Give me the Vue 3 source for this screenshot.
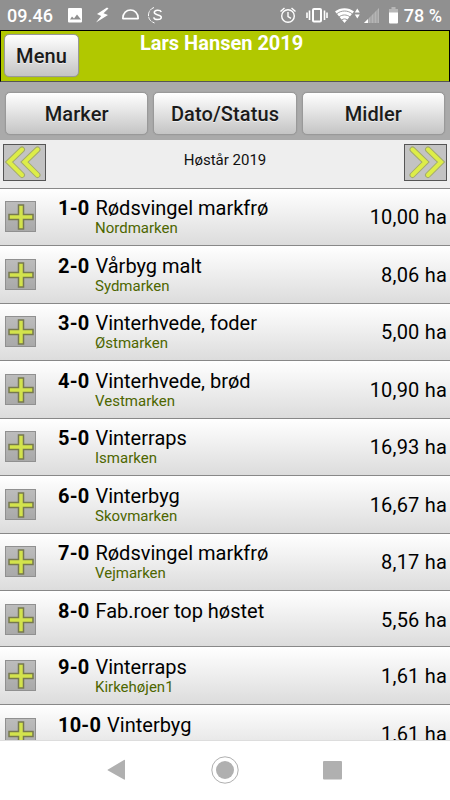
<template>
  <div class="screen">
    <header class="status-bar">
      <span class="clock">09.46</span>
      <svg class="status-icons" width="100" height="20" viewBox="0 0 100 20">
        <path fill="#fff" fill-rule="evenodd" d="M3 3h12q1 0 1 1v12.500q0 1-1 1H3q-1 0-1-1V4q0-1 1-1zM4 14.500h11l-4-5-3 4-2-2z" />
        <path fill="#fff" d="M41 2.500 31 9l4.200 2L30 17.500l12-7.500-4.500-1.700 5-4.800z" />
        <path fill="none" stroke="#fff" stroke-width="1.600" stroke-linejoin="round" d="M56.800 13.600c0-11.500 15.400-11.500 15.400 0z" />
        <path fill="none" stroke="#fff" stroke-width="1" stroke-dasharray="5 1" d="M88 2.500c-6 2-7.500 10-2.500 14l3 1.500" />
        <path fill="none" stroke="#fff" stroke-width="1.500" d="M95.300 7c-1-2.500-7-2.500-7 .6 0 3 7 1.700 7 4.700 0 3-7 3-7.600 0" />
      </svg>
      <svg class="status-icons right" width="120" height="20" viewBox="0 0 120 20">
        <g fill="none" stroke="#fff" stroke-width="1.400">
          <circle cx="9" cy="11" r="6.300" />
          <path d="M9 7v4.500l3 1.800M1.500 6.500l4-3.500M16.500 6.500 12.500 3" />
          <rect x="34" y="4" width="8" height="12.500" rx="1" stroke-width="2" />
          <path stroke-width="1.600" d="M30.500 5.500v9.500M28 7.500v5.500M45.500 5.500v9.500M48 7.500v5.500" />
        </g>
        <path fill="#fff" d="M56 6.500C61 2 70 2 75 6.500L65.500 18z" />
        <path fill="none" stroke="#909090" stroke-width=".9" d="M57.500 9c4.500-4 11.500-4 16 0M60 12c3-2.700 8-2.700 11 0M62.500 15c2-1.500 4-1.500 6 0" />
        <path fill="#fff" d="m78.300 3.500 2.500 4h-5zM78.300 13.500l2.500-4h-5z" />
        <path fill="#b5b5b5" d="M85 18 100 3v15z" />
        <path stroke="#909090" stroke-width=".7" d="M89 12v6M92 9v9M95 6v12M98 4v14" />
        <path fill="#fff" d="m85 18 4-4v4z" />
        <path fill="#b7b7b7" d="M112.500 2h4v2h2.500v4h-9V4h2.500z" />
        <path fill="#fff" d="M110 7.500h9v10q0 1-1 1h-7q-1 0-1-1z" />
      </svg>
      <span class="battery">78 %</span>
    </header>

    <div class="title-bar">
      <button class="btn menu">Menu</button>
      <h1>Lars Hansen 2019</h1>
    </div>

    <nav class="tabs">
      <button v-for="tab in tabs" :key="tab" class="btn">{{ tab }}</button>
    </nav>

    <div class="year">
      <button class="arrow">
        <svg width="41" height="35" viewBox="0 0 41 35">
          <path class="outline" d="M18 4.500 5 17 18 30M33.500 4.500 20.500 17 33.500 30" />
          <path class="line" d="M18 4.500 5 17 18 30M33.500 4.500 20.500 17 33.500 30" />
        </svg>
      </button>
      <span>Høstår 2019</span>
      <button class="arrow next">
        <svg width="41" height="35" viewBox="0 0 41 35">
          <path class="outline" d="M18 4.500 5 17 18 30M33.500 4.500 20.500 17 33.500 30" />
          <path class="line" d="M18 4.500 5 17 18 30M33.500 4.500 20.500 17 33.500 30" />
        </svg>
      </button>
    </div>

    <ul class="fields">
      <li v-for="field in fields" :key="field.nr" :class="{ short: !field.place }">
        <span class="plus">
          <svg width="29" height="29" viewBox="0 0 29 29">
            <path d="M12.500 3h5v9.500h9.500v5h-9.500v9.500h-5v-9.500H3v-5h9.500z" />
          </svg>
        </span>
        <div class="info">
          <p class="name"><b>{{ field.nr }}</b>{{ field.crop }}</p>
          <p class="place">{{ field.place }}</p>
        </div>
        <span class="area">{{ field.area }} ha</span>
      </li>
    </ul>

    <footer class="nav-bar">
      <svg width="450" height="59" viewBox="0 0 450 59">
        <path fill="#b0b0b0" d="M108 28.500 124 19q1-.5 1 .5v18.500q0 1-1 .5L108 29.500q-1-.5 0-1z" />
        <circle cx="225" cy="29" r="13.200" fill="none" stroke="#b0b0b0" />
        <circle cx="225" cy="29" r="9" fill="#b0b0b0" />
        <rect x="323" y="20" width="19" height="18.500" rx="1" fill="#b0b0b0" />
      </svg>
    </footer>
  </div>
</template>

<script setup>
import { ref } from "vue";

const tabs = ["Marker", "Dato/Status", "Midler"];

const fields = ref([
  { nr: "1-0", crop: "Rødsvingel markfrø", place: "Nordmarken", area: "10,00" },
  { nr: "2-0", crop: "Vårbyg malt", place: "Sydmarken", area: "8,06" },
  { nr: "3-0", crop: "Vinterhvede, foder", place: "Østmarken", area: "5,00" },
  { nr: "4-0", crop: "Vinterhvede, brød", place: "Vestmarken", area: "10,90" },
  { nr: "5-0", crop: "Vinterraps", place: "Ismarken", area: "16,93" },
  { nr: "6-0", crop: "Vinterbyg", place: "Skovmarken", area: "16,67" },
  { nr: "7-0", crop: "Rødsvingel markfrø", place: "Vejmarken", area: "8,17" },
  { nr: "8-0", crop: "Fab.roer top høstet", place: "", area: "5,56" },
  { nr: "9-0", crop: "Vinterraps", place: "Kirkehøjen1", area: "1,61" },
  { nr: "10-0", crop: "Vinterbyg", place: "", area: "1,61" },
]);
</script>

<style>
body {
  margin: 0;
}
</style>

<style scoped>
* {
  box-sizing: border-box;
}

.screen {
  width: 450px;
  height: 800px;
  display: flex;
  flex-direction: column;
  overflow: hidden;
  background: #eee;
  color: #111;
  font-family: Roboto, "Liberation Sans", sans-serif;
}

.status-bar {
  flex: none;
  height: 30px;
  display: flex;
  align-items: center;
  padding: 1px 8px 0 7px;
  background: #909090;
  color: #fff;
  font-size: 18px;
  font-weight: 500;
}

.clock {
  width: 59px;
}

.status-icons {
  margin-top: -1px;
}

.status-icons.right {
  margin-left: 113px;
}

.battery {
  margin-left: auto;
  white-space: nowrap;
}

.title-bar {
  flex: none;
  height: 52px;
  display: flex;
  align-items: flex-start;
  padding: 3px;
  border: 1px solid #000;
  border-bottom-color: #555;
  background: #b1c800;
}

h1 {
  margin: -2px 0 0 61px;
  color: #fff;
  font-size: 20px;
  line-height: 23px;
  font-weight: 700;
}

.btn {
  height: 43px;
  padding: 0;
  border: 1px solid #999;
  border-radius: 5px;
  background: linear-gradient(#fff, #c4c4c4);
  box-shadow: 0 0 1px #888;
  color: #1b1b1b;
  font: 500 20px Roboto, sans-serif;
  letter-spacing: 0.1px;
  text-shadow: 0 1px 0 #eee;
}

.menu {
  width: 75px;
}

.tabs {
  flex: none;
  height: 58px;
  display: flex;
  gap: 5px;
  padding: 10px 5px 0;
  background: #aaa;
}

.tabs .btn {
  flex: 1 1 0;
}

.year {
  flex: none;
  height: 47.6px;
  display: flex;
  align-items: flex-start;
  justify-content: space-between;
  padding: 4px 3px 0;
  background: #eee;
  font-size: 15px;
  line-height: 33px;
}

.arrow {
  width: 43px;
  height: 37px;
  padding: 0;
  border: 1px solid #555;
  background: #c3c3c3;
}

.arrow svg {
  display: block;
}

.arrow.next svg {
  transform: scaleX(-1);
}

.arrow path {
  fill: none;
  stroke-linecap: round;
}

.outline {
  stroke: #a3aa6c;
  stroke-width: 6;
}

.line {
  stroke: #dded48;
  stroke-width: 4;
}

.fields {
  flex: 1;
  min-height: 0;
  margin: 0;
  padding: 0;
  list-style: none;
  overflow: hidden;
}

.fields li {
  height: 57.5px;
  display: flex;
  padding: 8.8px 3px 0 5px;
  border-top: 1px solid #888;
  background: linear-gradient(#fff, #dcdcdc);
}

.fields li.short {
  height: 56.3px;
}

.plus {
  width: 31px;
  height: 31px;
  margin-top: 4px;
  border: 1px solid #909090;
  background: linear-gradient(#bcbcbc, #a9a9a9);
}

.plus svg {
  display: block;
}

.plus path {
  fill: #d3e34d;
  stroke: #77794f;
  stroke-width: 1.5;
}

.info {
  flex: 1;
  margin-left: 22px;
}

.info p {
  margin: 0;
}

.name {
  color: #000;
  font-size: 20px;
  line-height: 23px;
}

.name b {
  margin-right: 6px;
  letter-spacing: 0.2px;
}

.info .place {
  margin-left: 37px;
  color: #4d6600;
  font-size: 15px;
  line-height: 17px;
}

.area {
  margin-top: 8px;
  color: #000;
  font-size: 20px;
  line-height: 24px;
  letter-spacing: 0.2px;
}

.nav-bar {
  flex: none;
  height: 60px;
  border-top: 1px solid #ddd;
  background: #fff;
}

.nav-bar svg {
  display: block;
}
</style>
